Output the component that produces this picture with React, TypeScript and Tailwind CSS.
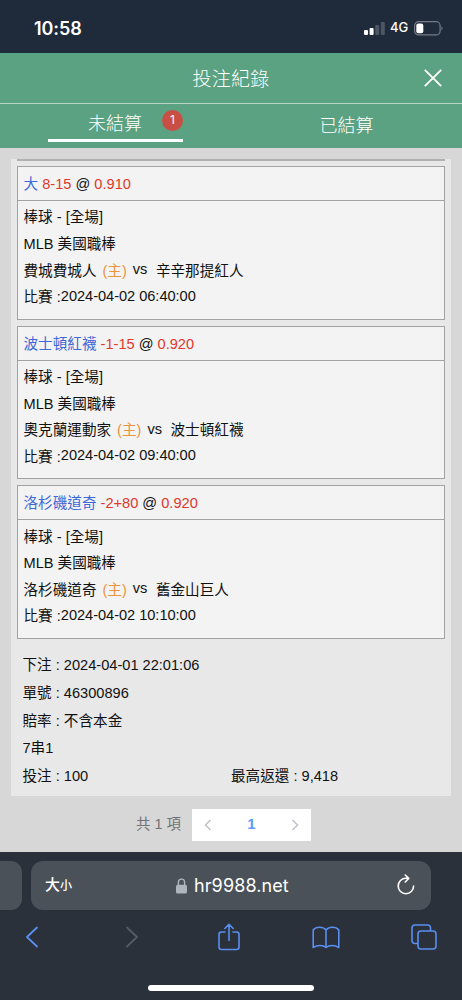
import type { ReactNode } from 'react';

interface Bet {
  pick: string;
  line: string;
  odds: string;
  home: string;
  away: string;
  time: string;
}

const BETS: Bet[] = [
  { pick: '大', line: '8-15', odds: '0.910', home: '費城費城人', away: '辛辛那提紅人', time: '2024-04-02 06:40:00' },
  { pick: '波士頓紅襪', line: '-1-15', odds: '0.920', home: '奧克蘭運動家', away: '波士頓紅襪', time: '2024-04-02 09:40:00' },
  { pick: '洛杉磯道奇', line: '-2+80', odds: '0.920', home: '洛杉磯道奇', away: '舊金山巨人', time: '2024-04-02 10:10:00' },
];

const SUMMARY = ['下注 : 2024-04-01 22:01:06', '單號 : 46300896', '賠率 : 不含本金', '7串1'];

export default function App() {
  return (
    <div className="flex h-[1000px] w-[462px] flex-col overflow-hidden bg-[#d7d7d7] font-['Liberation_Sans','Noto_Sans_CJK_TC',sans-serif] text-[14.6px] text-[#111]">
      <StatusBar />
      <Header />

      <main className="flex min-h-0 flex-1 flex-col px-[11px] pt-[11px]">
        <div className="h-[637px] bg-[#e8e8e8] px-[6px]">
          <div className="h-[2px] bg-[#b0b0b0]" />
          <div className="mt-[5px] flex flex-col gap-[6px]">
            {BETS.map((bet) => (
              <BetCard key={bet.pick} bet={bet} />
            ))}
          </div>

          <div className="mt-[13px] pl-[5.5px]">
            {SUMMARY.map((text) => (
              <p key={text} className="flex h-[27.9px] items-center whitespace-pre">
                {text}
              </p>
            ))}
            <div className="flex h-[27.9px] items-center">
              <p className="w-[208.5px]">投注 : 100</p>
              <p>最高返還 : 9,418</p>
            </div>
          </div>
        </div>

        {/* Pagination */}
        <div className="mt-[13px] flex h-8 items-center pl-[125px]">
          <span className="w-[56px] text-[14.4px] text-[#707276]">共 1 項</span>
          <div className="flex h-8 w-[119px] items-center justify-between bg-white px-3">
            <svg viewBox="0 0 8 12" className="h-3 w-2" fill="none" stroke="#c0c4cc" strokeWidth="1.6">
              <path d="M6.5 1 1.5 6l5 5" />
            </svg>
            <span className="pb-[2px] font-['Liberation_Sans',sans-serif] text-[15px] font-bold text-[#5a9cf8]">1</span>
            <svg viewBox="0 0 8 12" className="h-3 w-2" fill="none" stroke="#c0c4cc" strokeWidth="1.6">
              <path d="m1.5 1 5 5-5 5" />
            </svg>
          </div>
        </div>
      </main>

      <BrowserBar />
    </div>
  );
}

function StatusBar() {
  return (
    <div className="flex h-[53px] flex-none items-center bg-[#1f2a3a] pl-[34px] pt-[3px] font-[Inter,sans-serif] text-white">
      <span className="w-[330px] text-[18px] font-semibold tracking-[-0.1px]">10:58</span>
      <svg viewBox="0 0 21 13" className="h-[13px] w-[21px]">
        <rect x="0" y="8" width="4" height="5" rx="1" fill="#fff" />
        <rect x="5.6" y="6" width="4" height="7" rx="1" fill="#fff" />
        <rect x="11.2" y="3" width="4" height="10" rx="1" fill="#4d5664" />
        <rect x="16.8" y="0" width="4" height="13" rx="1" fill="#4d5664" />
      </svg>
      <span className="ml-[5px] w-[24px] text-[13px] font-medium">4G</span>
      <svg viewBox="0 0 30 15" className="h-[15px] w-[30px]" fill="none">
        <rect x="0.6" y="0.7" width="25.5" height="13.2" rx="4" stroke="#747c87" strokeWidth="1.2" />
        <rect x="2.3" y="2.5" width="7" height="9.7" rx="2" fill="#fff" />
        <path d="M27.5 5.2c1.4.6 1.4 3.6 0 4.2z" fill="#747c87" />
      </svg>
    </div>
  );
}

function Header() {
  return (
    <header className="flex-none bg-[#5ba283] text-white">
      <div className="grid h-[51px] grid-cols-[1fr_auto_1fr] items-center border-b border-[#b5d2c5]">
        <h1 className="col-start-2 pt-[4px] text-[19px] font-light tracking-[0.2px]">投注紀錄</h1>
        <svg viewBox="0 0 18 18" className="mr-[20px] h-[18px] w-[18px] justify-self-end" fill="none" stroke="currentColor" strokeWidth="1.8">
          <path d="m.8.8 16.4 16.4M17.2.8.8 17.2" />
        </svg>
      </div>
      <div className="grid h-[44px] grid-cols-2">
        <div className="mx-auto flex h-[38px] w-[135px] items-center justify-between border-b-[3px] border-white pl-[40px]">
          <span className="pt-[5px] text-[18px] font-light">未結算</span>
          <span className="mb-[3px] grid h-[21px] w-[21px] place-items-center rounded-full bg-[#c94f45] font-[Inter,sans-serif] text-[12px]">1</span>
        </div>
        <span className="pt-[9px] text-center text-[18px] font-light">已結算</span>
      </div>
    </header>
  );
}

function Row({ children }: { children: ReactNode }) {
  return <div className="flex h-[26.6px] items-center whitespace-pre">{children}</div>;
}

function BetCard({ bet }: { bet: Bet }) {
  return (
    <article className="h-[153.6px] border border-[#a2a2a2] bg-[#f3f3f3]">
      <p className="h-[34px] border-b border-[#a2a2a2] pl-[5.5px] leading-[34px] text-[#e0382c]">
        <span className="text-[#3d68d8]">{bet.pick}</span> {bet.line} <span className="text-[#111]">@</span> {bet.odds}
      </p>
      <div className="pl-[5.5px] pt-[4px]">
        <Row>棒球 - [全場]</Row>
        <Row>MLB 美國職棒</Row>
        <Row>
          <span>{bet.home}</span>
          <span className="ml-[6px] text-[#eb9440]">(主)</span>
          <span className="ml-[6px] mb-[3px]">vs</span>
          <span className="ml-[8.5px]">{bet.away}</span>
        </Row>
        <Row>
          <span>比賽 :</span>
          <span className="mb-[3px] tracking-[-0.03px]">{bet.time}</span>
        </Row>
      </div>
    </article>
  );
}

function BrowserBar() {
  return (
    <footer className="flex h-[148px] flex-none flex-col bg-[#2a313a] pt-[9px]">
      <div className="flex h-[49px] gap-[9px]">
        <div className="w-[22px] rounded-r-[11px] bg-[#4a5159]" />
        <div className="flex w-[400px] items-center rounded-[12px] bg-[#4a5159] pl-[14px] pr-[16px] text-white">
          <span className="w-[131px] font-medium">
            <span className="text-[15px]">大</span>
            <span className="text-[12px]">小</span>
          </span>
          <svg viewBox="0 0 11 16" className="h-[16px] w-[11px]">
            <path d="M2.4 7V4.2a3.1 3.1 0 0 1 6.2 0V7" fill="none" stroke="#b0b4bc" strokeWidth="1.4" />
            <rect y="6.8" width="11" height="8.7" rx="1.6" fill="#b0b4bc" />
          </svg>
          <span className="ml-[7px] font-[Inter,sans-serif] text-[18px] tracking-[0.1px]">hr9988.net</span>
          <svg viewBox="0 0 18 21" className="mb-[3px] ml-auto h-[21px] w-[18px]" fill="none" stroke="currentColor" strokeWidth="1.6" strokeLinecap="round" strokeLinejoin="round">
            <path d="M16.6 12a7.7 7.7 0 1 1-7.7-7.7h2.7M8.2 1l3.6 3.4L8.2 8" />
          </svg>
        </div>
      </div>

      <nav className="mt-[12px] flex h-[30px] items-center pl-[26px] text-[#5a8eef]">
        <svg viewBox="0 0 12 22" className="h-[22px] w-[12px]" fill="none" stroke="currentColor" strokeWidth="1.8" strokeLinecap="round" strokeLinejoin="round">
          <path d="M11 1.5 1 11l10 9.5" />
        </svg>
        <svg viewBox="0 0 12 22" className="ml-[88px] h-[22px] w-[12px]" fill="none" stroke="#555b64" strokeWidth="1.8" strokeLinecap="round" strokeLinejoin="round">
          <path d="m1 1.5 10 9.5-10 9.5" />
        </svg>
        <svg viewBox="0 0 24 28" className="ml-[79px] h-[28px] w-[24px]" fill="none" stroke="currentColor" strokeWidth="1.6" strokeLinecap="round" strokeLinejoin="round">
          <path d="M8 9H4.5A2.5 2.5 0 0 0 2 11.5V24a2.5 2.5 0 0 0 2.5 2.5h15A2.5 2.5 0 0 0 22 24V11.5A2.5 2.5 0 0 0 19.5 9H16M12 17.5V1.5M7.8 5.5 12 1.3l4.2 4.2" />
        </svg>
        <svg viewBox="0 0 28 23" className="ml-[71px] h-[23px] w-[28px]" fill="none" stroke="currentColor" strokeWidth="1.6" strokeLinecap="round" strokeLinejoin="round">
          <path d="M14 4v17.5c-3-2.6-9-2.6-12.800 0V4C4 .4 11 .4 14 4Zm0 0c3-3.6 10-3.6 12.800 0v17.500c-3.800-2.600-9.800-2.600-12.800 0" />
        </svg>
        <svg viewBox="0 0 26 26" className="ml-[71px] h-[26px] w-[26px]" fill="none" stroke="currentColor" strokeWidth="1.6">
          <path d="M7 19.5H4A3 3 0 0 1 1 16.5V4a3 3 0 0 1 3-3h12.500a3 3 0 0 1 3 3v3" />
          <rect x="7" y="7" width="18" height="18" rx="3" />
        </svg>
      </nav>

      <div className="mx-auto mt-auto mb-[9px] h-[6px] w-[166px] rounded-full bg-white" />
    </footer>
  );
}
